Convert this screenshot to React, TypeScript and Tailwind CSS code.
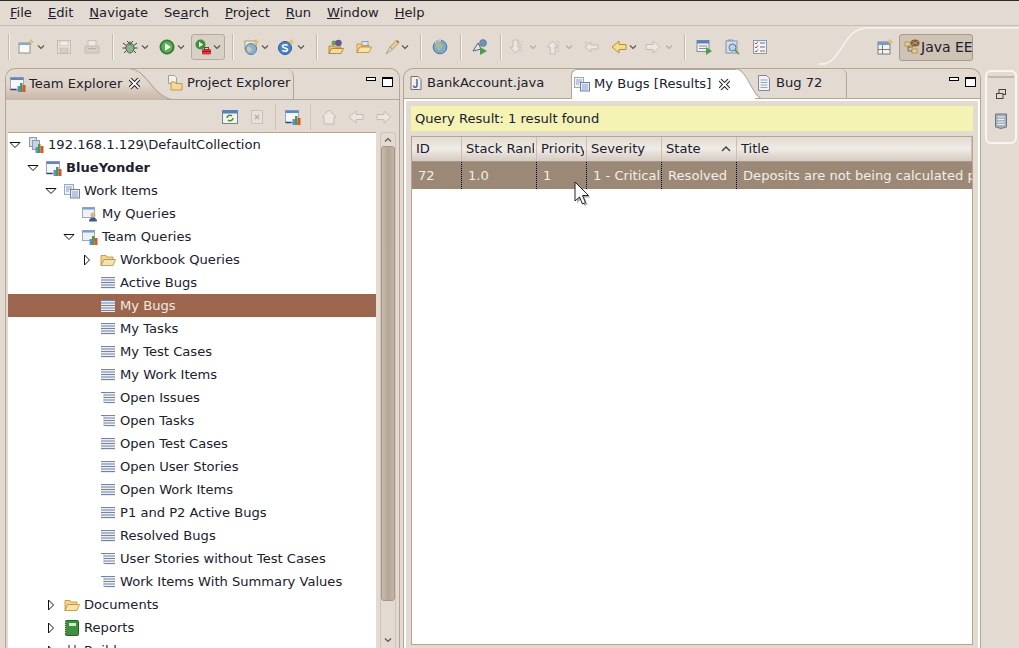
import React from "react";

type IconProps = { className?: string };

const Chev = ({ className = "" }: IconProps) => (
  <svg viewBox="0 0 8 8" className={`w-2 h-2 shrink-0 ${className}`}>
    <path d="M1 2.5 L4 5.5 L7 2.5" fill="none" stroke="#5a5650" strokeWidth="1.2" />
  </svg>
);

const ChevOff = ({ className = "" }: IconProps) => (
  <svg viewBox="0 0 8 8" className={`w-2 h-2 shrink-0 ${className}`}>
    <path d="M1 2.5 L4 5.5 L7 2.5" fill="none" stroke="#b5aea6" strokeWidth="1.2" />
  </svg>
);

const Sep = ({ className = "" }: IconProps) => (
  <div className={`w-[2px] h-[26px] shrink-0 bg-[#f7f4f0] border-l border-[#c4b9ad] ${className}`} />
);

const I = ({ className = "", children }: IconProps & { children: React.ReactNode }) => (
  <svg viewBox="0 0 16 16" className={`w-4 h-4 shrink-0 ${className}`}>
    {children}
  </svg>
);

const Spark = () => (
  <path d="M13 0.5l.8 1.8 1.8.7-1.8.7-.8 1.800-.7-1.800-1.800-.7 1.800-.7z" fill="#f4d35e" stroke="#c79a2a" strokeWidth=".4" />
);

const NewIcon = ({ className }: IconProps) => (
  <I className={className}>
    <rect x="1" y="4" width="11" height="10" fill="#fdfbe8" stroke="#7d93b8" />
    <rect x="1" y="4" width="11" height="2" fill="#8aa5cf" />
    <Spark />
  </I>
);
const SaveIcon = ({ className }: IconProps) => (
  <I className={className}>
    <rect x="1.500" y="1.500" width="13" height="13" fill="#e6e0d9" stroke="#c4bdb5" />
    <rect x="4" y="2" width="8" height="4.500" fill="#f2eee9" stroke="#cdc6be" strokeWidth=".7" />
    <rect x="4" y="9" width="8" height="5" fill="#d5cec6" stroke="#c4bdb5" strokeWidth=".7" />
  </I>
);
const PrintIcon = ({ className }: IconProps) => (
  <I className={className}>
    <rect x="4" y="1.500" width="8" height="6" fill="#eee9e3" stroke="#c9c2ba" />
    <rect x="1" y="7" width="14" height="7" rx="1" fill="#d8d1c9" stroke="#c2bbb3" />
    <rect x="4" y="9" width="8" height="1.200" fill="#b9b2aa" />
  </I>
);
const BugIcon = ({ className }: IconProps) => (
  <I className={className}>
    <path d="M1 4l4 3M15 4l-4 3M0.500 9h4M15.500 9h-4M2 14l3-3M14 14l-3-3M5 2l2 2M11 2l-2 2" stroke="#3c4a34" strokeWidth="1" fill="none" />
    <ellipse cx="8" cy="9" rx="4" ry="5" fill="#8fb18a" stroke="#47604a" />
    <circle cx="8" cy="4.500" r="2" fill="#5d7a5a" />
  </I>
);
const RunIcon = ({ className }: IconProps) => (
  <I className={className}>
    <circle cx="8" cy="8" r="7" fill="#3f8f3c" stroke="#2a6a2c" />
    <circle cx="8" cy="8" r="5.400" fill="#5fae55" />
    <path d="M6 4.200 L12 8 L6 11.800z" fill="#f2f8ee" />
  </I>
);
const RunExtIcon = ({ className }: IconProps) => (
  <I className={className}>
    <circle cx="5.500" cy="5.500" r="5" fill="#3f8f3c" />
    <path d="M4 2.800 L8.200 5.500 L4 8.200z" fill="#f2f8ee" />
    <rect x="7" y="10" width="9" height="5.500" rx="1" fill="#d8383a" />
    <rect x="9.500" y="8.500" width="4" height="2" fill="none" stroke="#a82a2c" />
    <rect x="7" y="12" width="9" height="1" fill="#8e1e20" />
  </I>
);
const ServerIcon = ({ className }: IconProps) => (
  <I className={className}>
    <rect x="2" y="2" width="11" height="8" fill="#f1ecd8" stroke="#a49a80" />
    <circle cx="8" cy="10" r="5.500" fill="#8db0cf" stroke="#5d7da3" />
    <path d="M4 8c2-2 3 0 4 1s1 3-1 4-2-1-3-2z" fill="#c3cfae" />
    <Spark />
  </I>
);
const SIcon = ({ className }: IconProps) => (
  <I className={className}>
    <circle cx="7" cy="9" r="6.500" fill="#4b82c6" stroke="#2c5a96" />
    <path d="M9.500 6.500c-1.500-1.200-5-1-5 .8 0 2.200 5 1.200 5 3.400 0 1.800-3.500 2-5.200.7" fill="none" stroke="#fff" strokeWidth="1.700" />
    <Spark />
  </I>
);
const FolderOpen = ({ className }: IconProps) => (
  <I className={className}>
    <path d="M1 3.500h5l1 1.500h6v3H4L1 13.500z" fill="#f3d48f" stroke="#b88b3a" strokeWidth=".8" />
    <path d="M3.800 7.500H15.500L13 13.500H1z" fill="#f8e2ab" stroke="#b88b3a" strokeWidth=".8" />
  </I>
);
const FolderPurple = ({ className }: IconProps) => (
  <I className={className}>
    <circle cx="6" cy="4" r="2.500" fill="#6a9d63" />
    <circle cx="10.500" cy="4" r="3.200" fill="#5d5a92" />
    <path d="M1 7h5l1 1h6v2H4L1 14.500z" fill="#efc36d" stroke="#a77a2b" strokeWidth=".8" />
    <path d="M3.500 9.500H15.500L13 14.500H1z" fill="#f6dc9b" stroke="#a77a2b" strokeWidth=".8" />
  </I>
);
const FolderBox = ({ className }: IconProps) => (
  <I className={className}>
    <rect x="6" y="2.500" width="6" height="5" fill="#dfe3ea" stroke="#8493a8" strokeWidth=".8" />
    <path d="M1 5h4l1 1.500h7V8H4L1 13.500z" fill="#f3d48f" stroke="#b88b3a" strokeWidth=".8" />
    <path d="M3.800 8H15.500L13 13.500H1z" fill="#f8e2ab" stroke="#b88b3a" strokeWidth=".8" />
  </I>
);
const PenIcon = ({ className }: IconProps) => (
  <I className={className}>
    <path d="M6 8 L12.500 1 L15 3.500 L8.500 10.500z" fill="#e8cf9a" stroke="#a48d4d" strokeWidth=".8" />
    <path d="M6 8 L8.500 10.500 L2 15z" fill="#dcd8d2" stroke="#918d87" strokeWidth=".7" />
    <path d="M13 2l1.500 1.500" stroke="#8a5a35" strokeWidth="1.500" />
  </I>
);
const GlobeIcon = ({ className }: IconProps) => (
  <I className={className}>
    <circle cx="8" cy="8" r="6.800" fill="#7da9cf" stroke="#4f6f92" />
    <path d="M4 5c2-3 5-2 6 0s1 3-1 5-2 3-3 1-4-3-2-6z" fill="#a9b98a" />
    <path d="M3 4a7 7 0 0 1 6-2.500" stroke="#dbe8f3" fill="none" />
  </I>
);
const PersonRun = ({ className }: IconProps) => (
  <I className={className}>
    <circle cx="11" cy="4" r="3.500" fill="#7191b8" stroke="#546f90" strokeWidth=".6" />
    <path d="M1 12L6 4l3 6z" fill="#e4e8ee" stroke="#55627a" />
    <path d="M8 8l7 4-7 4z" fill="#4d9e48" />
  </I>
);
const NavDown = ({ className }: IconProps) => (
  <I className={className}>
    <path d="M5 1h5v7h3l-5.500 6L2 8h3z" fill="#ebe6df" stroke="#c3bcb3" />
    <path d="M11 3h4M11 6h4M11 9h4M11 12h4" stroke="#cfc8c0" />
  </I>
);
const NavUp = ({ className }: IconProps) => (
  <I className={className}>
    <path d="M5 15h5V8h3L7.500 2 2 8h3z" fill="#ebe6df" stroke="#c3bcb3" />
    <path d="M11 3h4M11 6h4M11 9h4M11 12h4" stroke="#cfc8c0" />
  </I>
);
const LastEdit = ({ className }: IconProps) => (
  <I className={className}>
    <path d="M15 6H8V3L2 8l6 5v-3h7z" fill="#ebe6df" stroke="#c3bcb3" />
    <path d="M3 1l1 2 2 .5-2 .7-1 2-.8-2-2-.7 2-.5z" fill="#d5cfc7" />
  </I>
);
const ArrowL = ({ className, on }: IconProps & { on?: boolean }) => (
  <I className={className}>
    <path
      d="M15 5.500H8V2L1 8l7 6v-3.500h7z"
      fill={on ? "#f6dc8f" : "#ebe6df"}
      stroke={on ? "#b8902f" : "#c3bcb3"}
    />
  </I>
);
const ArrowR = ({ className }: IconProps) => (
  <I className={className}>
    <path d="M1 5.500h7V2l7 6-7 6v-3.500H1z" fill="#ebe6df" stroke="#c3bcb3" />
  </I>
);
const TaskRun = ({ className }: IconProps) => (
  <I className={className}>
    <rect x="1" y="1.500" width="12" height="11" fill="#f4f1ea" stroke="#7d8ca8" />
    <rect x="1" y="1.500" width="12" height="3" fill="#5c81b8" />
    <path d="M3 7h8M3 9.500h8" stroke="#7d8ca8" />
    <path d="M10 8l6 4-6 4z" fill="#4d9e48" />
  </I>
);
const SearchDoc = ({ className }: IconProps) => (
  <I className={className}>
    <rect x="2" y="2" width="11" height="12" fill="#d6dde8" stroke="#8894ab" />
    <path d="M4 2v-1h5v1" fill="none" stroke="#8894ab" />
    <circle cx="8.500" cy="8.500" r="3.500" fill="#b8d3ea" stroke="#5b7696" />
    <path d="M11 11l4 4" stroke="#6b8f4a" strokeWidth="1.600" />
  </I>
);
const CheckList = ({ className }: IconProps) => (
  <I className={className}>
    <rect x="1.500" y="1.500" width="13" height="13" fill="#f5f3ef" stroke="#8a97ae" />
    <path d="M3 4l1 1 2-2.500M3 8l1 1 2-2.500M3 12l1 1 2-2.500" stroke="#c2453b" fill="none" />
    <path d="M8 4h5M8 8h5M8 12h5" stroke="#5976a6" />
  </I>
);
const OpenPersp = ({ className }: IconProps) => (
  <I className={className}>
    <rect x="1" y="3" width="12" height="12" fill="#f6f3ec" stroke="#6f7f98" />
    <rect x="1" y="3" width="12" height="3" fill="#7d9ac6" />
    <path d="M5.500 6v9M1 10.500h12" stroke="#6f7f98" />
    <Spark />
  </I>
);
const JavaEE = ({ className }: IconProps) => (
  <I className={className}>
    <path d="M4 5v7h5M4 8h5" fill="none" stroke="#7b6a55" />
    <rect x="1" y="3" width="5" height="4" fill="#eed27a" stroke="#8f7b3c" strokeWidth=".6" />
    <rect x="8" y="10" width="5" height="4" fill="#eed27a" stroke="#8f7b3c" strokeWidth=".6" />
    <ellipse cx="11" cy="4" rx="4.500" ry="3.500" fill="#8a5a35" />
    <path d="M7.500 6l7-4M8.500 2.500l5 3" stroke="#d0b58c" strokeWidth=".7" />
  </I>
);

const Bars = () => (
  <>
    <rect x="7.500" y="10" width="2.500" height="6" fill="#5b8fd0" />
    <rect x="10" y="7" width="2.500" height="9" fill="#4b9a45" />
    <rect x="12.500" y="9" width="3" height="7" fill="#d9532f" />
  </>
);
const TeamIcon = ({ className }: IconProps) => (
  <I className={className}>
    <rect x="0.500" y="1.500" width="13" height="12" fill="#f5f7fb" stroke="#9aaac4" />
    <rect x="0.500" y="1.500" width="13" height="2.500" fill="#5f88c2" />
    <path d="M0.500 13.500h6" stroke="#33415c" strokeWidth="1.500" />
    <Bars />
  </I>
);
const ServerTeam = ({ className }: IconProps) => (
  <I className={className}>
    <rect x="1.500" y="0.500" width="7" height="9" fill="#d9e1ee" stroke="#8a99b6" />
    <rect x="4.500" y="3.500" width="7" height="9" fill="#c8d4e6" stroke="#8a99b6" />
    <Bars />
  </I>
);
const DocsIcon = ({ className }: IconProps) => (
  <I className={className}>
    <rect x="0.500" y="1.500" width="9" height="10" fill="#eef1f7" stroke="#9aa9c2" />
    <path d="M2 4h6M2 6h6M2 8h3" stroke="#8ea1c2" />
    <rect x="6.500" y="6.500" width="9" height="8.500" fill="#e6ebf4" stroke="#6f82a5" />
    <path d="M8 9h6M8 11h6M8 13h6" stroke="#8ea1c2" />
  </I>
);
const MyQuery = ({ className }: IconProps) => (
  <I className={className}>
    <rect x="0.500" y="1.500" width="12" height="10" fill="#eef1f7" stroke="#9aa9c2" />
    <rect x="0.500" y="1.500" width="12" height="2" fill="#7f9ac6" />
    <circle cx="11" cy="9" r="2.500" fill="#d9b08c" />
    <path d="M7 15.500c0-3 2-4 4-4s4 1 4 4z" fill="#3a5a8c" />
  </I>
);
const TeamQuery = ({ className }: IconProps) => (
  <I className={className}>
    <rect x="0.500" y="1.500" width="12" height="10" fill="#eef1f7" stroke="#9aa9c2" />
    <rect x="0.500" y="1.500" width="12" height="2" fill="#7f9ac6" />
    <Bars />
  </I>
);
const ListIcon = ({ className }: IconProps) => (
  <I className={className}>
    <rect x="1" y="2" width="14" height="12" fill="#e9edf3" />
    <path d="M1 2.500h14M1 5h14M1 7.500h14M1 10h14M1 12.500h14" stroke="#76849e" />
  </I>
);
const ListTreeIcon = ({ className }: IconProps) => (
  <I className={className}>
    <path d="M1 2.500h14" stroke="#76849e" />
    <rect x="5" y="3" width="10" height="11" fill="#eef1f5" />
    <path d="M4 5h11M4 7.500h11M4 10h11M4 12.500h11" stroke="#76849e" />
    <path d="M4 3v10" stroke="#a6b0c2" />
  </I>
);
const GreenBook = ({ className }: IconProps) => (
  <I className={className}>
    <rect x="1.500" y="0.500" width="13" height="15" rx="1" fill="#3e8f3f" stroke="#23602a" />
    <rect x="5" y="3" width="7" height="3" fill="#dbe8c8" />
    <path d="M1.500 2v12" stroke="#b6c89a" strokeDasharray="1 1" />
  </I>
);
const BuildIcon = ({ className }: IconProps) => (
  <I className={className}>
    <path d="M2 8h12M5 2v12M11 2v12" stroke="#4c6fb2" strokeWidth="1.500" />
  </I>
);
const JavaDoc = ({ className }: IconProps) => (
  <I className={className}>
    <path d="M3 1.500h7l3 3v10H3z" fill="#f2efe8" stroke="#77706a" />
    <path d="M9 4v6c0 3-3.500 3-3.500 0.500" stroke="#3f5fa8" strokeWidth="1.400" fill="none" />
  </I>
);
const PageIcon = ({ className }: IconProps) => (
  <I className={className}>
    <path d="M2.500 0.500h8l3 3v12h-11z" fill="#f0f2f6" stroke="#7e8898" />
    <path d="M4.500 5h7M4.500 7.500h7M4.500 10h7M4.500 12.500h7" stroke="#9aa4b3" />
  </I>
);
const ProjectIcon = ({ className }: IconProps) => (
  <I className={className}>
    <path d="M1.500 0.500h6l2 2v6h-8z" fill="#f0f0ee" stroke="#a0a0a0" />
    <path d="M4 7h4l1 1.500h6V15H4z" fill="#f6d88f" stroke="#b28a3a" strokeWidth=".8" />
  </I>
);

const CloseX = () => (
  <svg viewBox="0 0 12 12" className="w-[13px] h-[13px] shrink-0 ml-[3px]">
    <path d="M2 2l8 8M10 2l-8 8" stroke="#222" strokeWidth="3.600" />
    <path d="M2 2l8 8M10 2l-8 8" stroke="#fff" strokeWidth="1.800" />
  </svg>
);

const MinMax = ({ className = "" }: IconProps) => (
  <div className={`flex items-start gap-[6px] ${className}`}>
    <div className="w-[10px] h-[4px] mt-[8px] border border-black bg-white" />
    <div className="w-[11px] h-[10px] mt-[8px] border border-black border-t-2 bg-white" />
  </div>
);

const Arrow = ({ open }: { open?: boolean }) => (
  <svg viewBox="0 0 12 12" className="w-3 h-3">
    {open ? (
      <path d="M1 3.500h10L6 8.500z" fill="#fff" stroke="#111" strokeWidth="1" />
    ) : (
      <path d="M3.500 1v10L8.500 6z" fill="#fff" stroke="#111" strokeWidth="1" />
    )}
  </svg>
);

const indents: Record<number, string> = {
  0: "pl-0",
  1: "pl-[18px]",
  2: "pl-[36px]",
  3: "pl-[54px]",
  4: "pl-[72px]",
};

type TreeRow = {
  label: string;
  depth: number;
  icon: (p: IconProps) => React.ReactElement;
  arrow?: "open" | "closed";
  bold?: boolean;
  selected?: boolean;
};

const rows: TreeRow[] = [
  { label: "192.168.1.129\\DefaultCollection", depth: 0, icon: ServerTeam, arrow: "open" },
  { label: "BlueYonder", depth: 1, icon: TeamIcon, arrow: "open", bold: true },
  { label: "Work Items", depth: 2, icon: DocsIcon, arrow: "open" },
  { label: "My Queries", depth: 3, icon: MyQuery },
  { label: "Team Queries", depth: 3, icon: TeamQuery, arrow: "open" },
  { label: "Workbook Queries", depth: 4, icon: FolderOpen, arrow: "closed" },
  { label: "Active Bugs", depth: 4, icon: ListIcon },
  { label: "My Bugs", depth: 4, icon: ListIcon, selected: true },
  { label: "My Tasks", depth: 4, icon: ListIcon },
  { label: "My Test Cases", depth: 4, icon: ListIcon },
  { label: "My Work Items", depth: 4, icon: ListIcon },
  { label: "Open Issues", depth: 4, icon: ListTreeIcon },
  { label: "Open Tasks", depth: 4, icon: ListTreeIcon },
  { label: "Open Test Cases", depth: 4, icon: ListIcon },
  { label: "Open User Stories", depth: 4, icon: ListIcon },
  { label: "Open Work Items", depth: 4, icon: ListIcon },
  { label: "P1 and P2 Active Bugs", depth: 4, icon: ListIcon },
  { label: "Resolved Bugs", depth: 4, icon: ListIcon },
  { label: "User Stories without Test Cases", depth: 4, icon: ListTreeIcon },
  { label: "Work Items With Summary Values", depth: 4, icon: ListTreeIcon },
  { label: "Documents", depth: 2, icon: FolderOpen, arrow: "closed" },
  { label: "Reports", depth: 2, icon: GreenBook, arrow: "closed" },
  { label: "Builds", depth: 2, icon: BuildIcon, arrow: "closed" },
];

const columns = [
  { title: "ID", value: "72", width: "w-[50px]" },
  { title: "Stack Rank", value: "1.0", width: "w-[75px]" },
  { title: "Priority", value: "1", width: "w-[50px]" },
  { title: "Severity", value: "1 - Critical", width: "w-[75px]" },
  { title: "State", value: "Resolved", width: "w-[75px]", sort: true },
  { title: "Title", value: "Deposits are not being calculated properly", width: "flex-1" },
];

const menus: [string, string, string][] = [
  ["", "F", "ile"],
  ["", "E", "dit"],
  ["", "N", "avigate"],
  ["Se", "a", "rch"],
  ["", "P", "roject"],
  ["", "R", "un"],
  ["", "W", "indow"],
  ["", "H", "elp"],
];

export default function App() {
  return (
    <div className="relative w-[1019px] h-[648px] overflow-hidden flex flex-col bg-[#e3dbd2] text-[13.1px] leading-none text-[#20202c] font-['DejaVu_Sans',sans-serif]">
      <div className="h-px shrink-0 bg-[#2e2a2a]" />
      <div className="h-[25px] shrink-0 flex items-center gap-4 pl-[10px] border-b border-[#c9bcae]">
        {menus.map(([a, b, c]) => (
          <span key={b + c}>
            {a}
            <u>{b}</u>
            {c}
          </span>
        ))}
      </div>

      {/* toolbar */}
      <div className="relative h-[42px] shrink-0 flex items-center pl-[8px]">
        <svg viewBox="0 0 200 40" className="absolute left-[819px] top-0 w-[200px] h-[40px]">
          <path d="M-120 38H3C22 38 24 2 48 2H200" fill="none" stroke="#f8f5f1" strokeWidth="1.300" />
        </svg>
        <Sep />
        <NewIcon className="ml-[8px]" />
        <Chev className="ml-[3px]" />
        <SaveIcon className="ml-[11px]" />
        <PrintIcon className="ml-[12px]" />
        <Sep className="ml-[12px]" />
        <BugIcon className="ml-[8px]" />
        <Chev className="ml-[3px]" />
        <RunIcon className="ml-[10px]" />
        <Chev className="ml-[2px]" />
        <div className="ml-[6px] w-[34px] h-[26px] flex items-center justify-center gap-[2px] rounded-[3px] border border-[#b5aa9d] bg-[#d9d0c6]">
          <RunExtIcon />
          <Chev />
        </div>
        <Sep className="ml-[7px]" />
        <ServerIcon className="ml-[9px]" />
        <Chev className="ml-[2px]" />
        <SIcon className="ml-[9px]" />
        <Chev className="ml-[3px]" />
        <Sep className="ml-[11px]" />
        <FolderPurple className="ml-[10px]" />
        <FolderBox className="ml-[12px]" />
        <PenIcon className="ml-[12px]" />
        <Chev className="ml-[1px]" />
        <Sep className="ml-[11px]" />
        <GlobeIcon className="ml-[10px]" />
        <Sep className="ml-[12px]" />
        <PersonRun className="ml-[10px]" />
        <Sep className="ml-[12px]" />
        <NavDown className="ml-[6px]" />
        <ChevOff className="ml-[5px]" />
        <NavUp className="ml-[8px]" />
        <ChevOff className="ml-[4px]" />
        <LastEdit className="ml-[10px]" />
        <ArrowL on className="ml-[12px]" />
        <Chev className="ml-[2px]" />
        <ArrowR className="ml-[8px]" />
        <ChevOff className="ml-[4px]" />
        <Sep className="ml-[11px]" />
        <TaskRun className="ml-[10px]" />
        <SearchDoc className="ml-[12px]" />
        <CheckList className="ml-[12px]" />
        <OpenPersp className="ml-[109px]" />
        <div className="ml-[6px] w-[74px] h-[27px] flex items-center gap-[1px] pl-[4px] rounded-[3px] border border-[#a89a8b] bg-[#cfc3b5] whitespace-nowrap">
          <JavaEE />
          <span className="text-[14px]">Java EE</span>
        </div>
      </div>

      {/* panels */}
      <div className="flex-1 min-h-0 flex pl-[5px]">
        {/* left view */}
        <div className="w-[395px] shrink-0 flex flex-col rounded-t-[10px] border border-b-0 border-[#b5a595]">
          <div className="h-[31px] shrink-0 flex">
            <div className="relative z-10 w-[124px] flex items-center gap-[3px] pl-[4px] pb-[2px] rounded-tl-[10px] bg-gradient-to-b from-[#e3dbd2] via-[#e0d5cb] to-[#c9b6a6]">
              <TeamIcon />
              <span className="whitespace-nowrap">Team Explorer</span>
              <CloseX />
            </div>
            <svg viewBox="0 0 48 30" preserveAspectRatio="none" className="w-[48px] h-[31px] shrink-0">
              <defs>
                <linearGradient id="lt" x1="0" y1="0" x2="0" y2="1">
                  <stop offset="0" stopColor="#e3dbd2" />
                  <stop offset="0.5" stopColor="#e0d5cb" />
                  <stop offset="1" stopColor="#c9b6a6" />
                </linearGradient>
              </defs>
              <path d="M0 0C18 0 22 30 48 30H0z" fill="url(#lt)" />
              <path d="M0 0C18 0 22 30 48 30" fill="none" stroke="#b5a595" />
            </svg>
            <div className="relative -ml-[11px] w-[127px] flex items-center gap-[4px] pb-[2px] rounded-tr-[8px] border-r border-b border-[#b5a595] whitespace-nowrap">
              <ProjectIcon />
              <span>Project Explorer</span>
            </div>
            <div className="flex-1 border-b border-[#b5a595] flex justify-end">
              <MinMax className="pr-[6px]" />
            </div>
          </div>
          <div className="h-[32px] shrink-0 flex items-center pl-[214px] ml-[2px] pt-[1px]">
            <svg viewBox="0 0 16 16" className="w-4 h-4">
              <rect x="0.500" y="1.500" width="15" height="13" fill="#f2f5ea" stroke="#6b83a8" />
              <rect x="0.500" y="1.500" width="15" height="3" fill="#5a7fb5" />
              <path d="M5 9a3 3 0 0 1 5-2M11 9a3 3 0 0 1-5 2" fill="none" stroke="#3f8f3c" strokeWidth="1.500" />
            </svg>
            <svg viewBox="0 0 16 16" className="w-4 h-4 ml-[11px]">
              <rect x="2.500" y="1.500" width="11" height="13" fill="#e6e1da" stroke="#c9c2ba" />
              <path d="M6 6l4 4M10 6l-4 4" stroke="#b8b0a8" strokeWidth="1.500" />
            </svg>
            <div className="w-px h-[26px] bg-[#cfc5ba] ml-[10px]" />
            <TeamIcon className="ml-[9px]" />
            <div className="w-px h-[26px] bg-[#cfc5ba] ml-[9px]" />
            <svg viewBox="0 0 16 16" className="w-4 h-4 ml-[10px]">
              <path d="M8 1L1 8h2v7h10V8h2z" fill="#ebe6df" stroke="#c3bcb3" />
            </svg>
            <ArrowL className="ml-[11px]" />
            <ArrowR className="ml-[12px]" />
          </div>
          <div className="flex-1 min-h-0 flex pl-[2px]">
            <div className="w-[368px] shrink-0 bg-white overflow-hidden border-t border-[#b5a595]">
              {rows.map((r) => {
                const Icon = r.icon;
                return (
                  <div
                    key={r.label}
                    className={
                      r.selected
                        ? "h-[23px] flex items-center bg-[#9c664e] text-[#f3e9e1]"
                        : "h-[23px] flex items-center"
                    }
                  >
                    <div className={`flex items-center ${indents[r.depth]}`}>
                      <div className="w-[14px] flex justify-center">
                        {r.arrow && <Arrow open={r.arrow === "open"} />}
                      </div>
                      <Icon className="ml-[6px]" />
                      <span className={r.bold ? "ml-[4px] font-bold whitespace-nowrap" : "ml-[4px] whitespace-nowrap"}>
                        {r.label}
                      </span>
                    </div>
                  </div>
                );
              })}
            </div>
            <div className="w-[24px] ml-[4px] pr-[3px] flex flex-col items-center">
              <div className="w-[16px] flex-1 flex flex-col bg-[#e3dbd2] border border-b-0 border-[#d0c6ba] rounded-t-[3px]">
                <div className="h-[13px] flex items-center justify-center">
                  <Chev className="rotate-180" />
                </div>
                <div className="h-[455px] rounded-[3px] bg-gradient-to-r from-[#c9bdb0] via-[#b3a494] to-[#c2b5a7] border border-[#a59686]" />
                <div className="flex-1" />
                <div className="h-[16px] flex items-center justify-center">
                  <Chev />
                </div>
              </div>
            </div>
          </div>
        </div>

        {/* right view */}
        <div className="ml-[3px] w-[578px] shrink-0 flex flex-col rounded-t-[10px] border border-b-0 border-[#b5a595]">
          <div className="h-[30px] shrink-0 flex">
            <div className="w-[167px] flex items-center gap-[3px] pl-[4px] pb-[1px] border-b border-[#b5a595] rounded-tl-[10px] whitespace-nowrap">
              <JavaDoc />
              <span>BankAccount.java</span>
            </div>
            <div className="w-[165px] flex items-center gap-[4px] pl-[2px] pb-[1px] bg-white border-l border-t border-[#b5a595] rounded-tl-[6px] whitespace-nowrap">
              <DocsIcon />
              <span>My Bugs [Results]</span>
              <CloseX />
            </div>
            <svg viewBox="0 0 30 30" preserveAspectRatio="none" className="w-[30px] h-[31px] shrink-0">
              <path d="M0 0C12 0 16 30 30 30H0z" fill="#fff" />
              <path d="M0 0C12 0 16 30 30 30" fill="none" stroke="#b5a595" />
            </svg>
            <div className="relative -ml-[11px] w-[92px] flex items-center gap-[4px] pl-[1px] pb-[1px] border-r border-b border-[#b5a595] rounded-tr-[6px] whitespace-nowrap">
              <PageIcon />
              <span>Bug 72</span>
            </div>
            <div className="flex-1 border-b border-[#b5a595] flex justify-end">
              <MinMax className="pr-[4px]" />
            </div>
          </div>
          <div className="flex-1 min-h-0 flex flex-col border-2 border-b-0 border-white px-[5px] pt-[5px]">
            <div className="h-[25px] shrink-0 flex items-center pl-[4px] bg-[#f5f3b4] whitespace-nowrap">
              Query Result: 1 result found
            </div>
            <div className="mt-[5px] mb-[3px] flex-1 min-h-0 flex flex-col bg-white border border-[#b5a595] overflow-hidden">
              <div className="h-[25px] shrink-0 flex bg-gradient-to-b from-[#e3dbd2] via-[#efebe6] to-[#d5cbc1] border-b border-[#a89888]">
                {columns.map((c) => (
                  <div
                    key={c.title}
                    className={`${c.width} flex items-center pl-[4px] pr-[2px] whitespace-nowrap border-r border-[#cbbfb2] relative`}
                  >
                    <span className="block flex-1 min-w-0 overflow-hidden leading-[16px]">{c.title}</span>
                    {c.sort && (
                      <svg viewBox="0 0 12 8" className="absolute right-[4px] w-[12px] h-[8px]">
                        <path d="M2 6l4-4 4 4" fill="none" stroke="#444" strokeWidth="1.500" />
                      </svg>
                    )}
                  </div>
                ))}
              </div>
              <div className="h-[27px] shrink-0 flex bg-[#9c8876] text-[#f3eee8]">
                {columns.map((c) => (
                  <div
                    key={c.title}
                    className={`${c.width} flex items-center pl-[6px] overflow-hidden whitespace-nowrap border-r border-dotted border-black last:border-r-0`}
                  >
                    {c.value}
                  </div>
                ))}
              </div>
            </div>
          </div>
        </div>

        {/* right trim */}
        <div className="ml-[4px] mt-[2px] w-[32px] h-[74px] flex flex-col items-center rounded-[6px] border-2 border-[#f8f5f1]">
          <div className="w-[26px] h-[2px] mt-[4px] bg-[#c4b8aa]" />
          <svg viewBox="0 0 12 12" className="w-3 h-3 mt-[10px]">
            <rect x="4" y="1.500" width="6.500" height="5" fill="none" stroke="#444" />
            <rect x="1.500" y="5.500" width="6.500" height="5" fill="#e3dbd2" stroke="#444" />
          </svg>
          <svg viewBox="0 0 14 16" className="w-[14px] h-4 mt-[13px]">
            <path d="M1.500 1h11v13l-5.500 1.500-5.500-1.500z" fill="#a7b0bd" stroke="#6c7585" />
            <path d="M3.500 4h7M3.500 6.500h7M3.500 9h7M3.500 11.500h7" stroke="#eceff3" />
          </svg>
        </div>
      </div>

      {/* mouse cursor */}
      <svg viewBox="0 0 18 26" className="absolute left-[574px] top-[181px] w-[18px] h-[26px]">
        <path d="M3 3v19l4.500-4 3 7 3-1.500-3-7h6z" fill="#777" opacity=".6" />
        <path d="M1 1v19l4.500-4 3 7 3-1.500-3-7h6z" fill="#fff" stroke="#222" strokeWidth="1" />
      </svg>
    </div>
  );
}
